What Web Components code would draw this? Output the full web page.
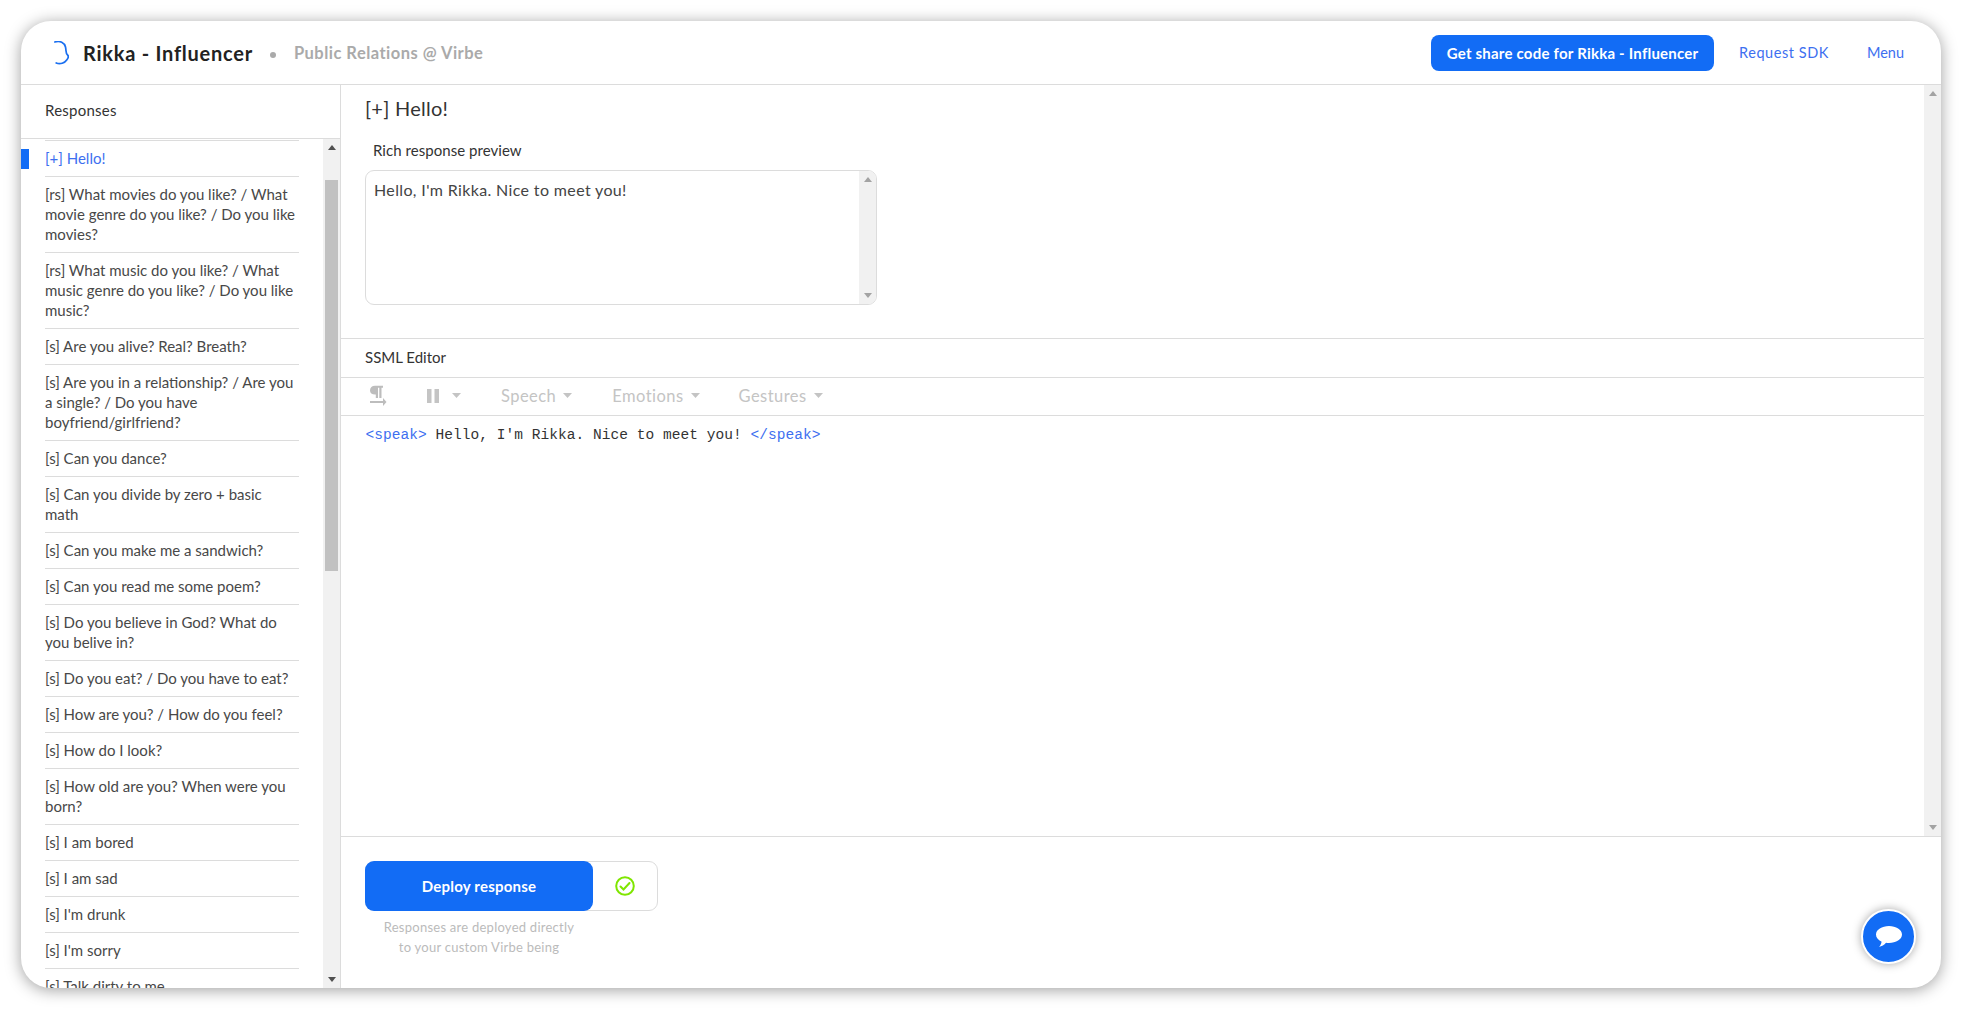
<!DOCTYPE html>
<html>
<head>
<meta charset="utf-8">
<title>Rikka - Influencer</title>
<style>
  html, body { margin: 0; height: 100%; background: #fff; overflow: hidden; }
  body { padding: 21px 21px 22px 21px; box-sizing: border-box; font-family: Lato, "Noto Sans", sans-serif; color: #333; }
</style>
</head>
<body>
<x-app>
  <x-header slot="header"></x-header>
  <x-sidebar slot="sidebar">
    <x-item active>[+] Hello!</x-item>
    <x-item>[rs] What movies do you like? / What<br>movie genre do you like? / Do you like<br>movies?</x-item>
    <x-item>[rs] What music do you like? / What<br>music genre do you like? / Do you like<br>music?</x-item>
    <x-item>[s] Are you alive? Real? Breath?</x-item>
    <x-item>[s] Are you in a relationship? / Are you<br>a single? / Do you have<br>boyfriend/girlfriend?</x-item>
    <x-item>[s] Can you dance?</x-item>
    <x-item>[s] Can you divide by zero + basic<br>math</x-item>
    <x-item>[s] Can you make me a sandwich?</x-item>
    <x-item>[s] Can you read me some poem?</x-item>
    <x-item>[s] Do you believe in God? What do<br>you belive in?</x-item>
    <x-item>[s] Do you eat? / Do you have to eat?</x-item>
    <x-item>[s] How are you? / How do you feel?</x-item>
    <x-item>[s] How do I look?</x-item>
    <x-item>[s] How old are you? When were you<br>born?</x-item>
    <x-item>[s] I am bored</x-item>
    <x-item>[s] I am sad</x-item>
    <x-item>[s] I'm drunk</x-item>
    <x-item>[s] I'm sorry</x-item>
    <x-item>[s] Talk dirty to me</x-item>
  </x-sidebar>
  <x-editor slot="main"></x-editor>
  <x-chat slot="chat"></x-chat>
</x-app>

<script>
const caret = `<svg width="9" height="5" viewBox="0 0 10 6" preserveAspectRatio="none"><path d="M0 0h10L5 6z" fill="currentColor"/></svg>`;

function shadow(el, html) {
  el.attachShadow({ mode: 'open' }).innerHTML = html;
}

class XApp extends HTMLElement {
  connectedCallback() {
    shadow(this, `
      <style>
        :host {
          display: grid;
          grid-template-columns: 320px 1fr;
          grid-template-rows: 64px 1fr;
          height: 100%;
          background: #fff;
          border-radius: 30px;
          box-shadow: 0 2px 16px rgba(0,0,0,.38);
          overflow: hidden;
          position: relative;
        }
        ::slotted([slot=header]) { grid-column: 1 / 3; }
      </style>
      <slot name="header"></slot>
      <slot name="sidebar"></slot>
      <slot name="main"></slot>
      <slot name="chat"></slot>`);
  }
}

class XHeader extends HTMLElement {
  connectedCallback() {
    shadow(this, `
      <style>
        :host {
          display: flex;
          align-items: center;
          height: 64px;
          box-sizing: border-box;
          padding: 0 36px 0 33px;
          border-bottom: 1px solid #dcdcdc;
          font-family: Lato, sans-serif;
        }
        svg { display: block; margin-right: 14px; }
        h1 { margin: 0; font-size: 20px; font-weight: 700; color: #222; letter-spacing: .75px; }
        .dot { width: 6px; height: 6px; border-radius: 50%; background: #aaa; margin: 4px 18px 0 17px; }
        .sub { font-size: 16.5px; font-weight: 700; color: #aaa; letter-spacing: .48px; flex: 1; }
        .share {
          height: 36px; width: 283px; box-sizing: border-box; border-radius: 8px; background: #126cf5;
          color: #fff; display: flex; align-items: center; justify-content: center;
          font-size: 15px; font-weight: 700; letter-spacing: .22px;
        }
        a { color: #3d6ff0; font-size: 14.5px; letter-spacing: .55px; }
        .sdk { margin: 0 38px 0 25px; }
        .menu { letter-spacing: 0; margin-right: 1px; }
      </style>
      <svg width="15" height="24" viewBox="54 40 15 24" fill="none" stroke="#1a6ff0" stroke-width="1.7" stroke-linecap="round"><path d="M54.8 41c5.200-1.500 9.700.5 10.700 5 .8 3.500 0 6 2 8 1.500 1.200.8 3-.8 5-2 3-6.500 4.700-10.500 3"/></svg>
      <h1>Rikka - Influencer</h1>
      <span class="dot"></span>
      <span class="sub">Public Relations @ Virbe</span>
      <span class="share">Get share code for Rikka - Influencer</span>
      <a class="sdk">Request SDK</a>
      <a class="menu">Menu</a>`);
  }
}

class XScrollbar extends HTMLElement {
  connectedCallback() {
    const dark = this.hasAttribute('dark');
    const start = this.getAttribute('start');
    const size = this.getAttribute('size');
    shadow(this, `
      <style>
        :host {
          display: flex; flex-direction: column; align-items: center; flex: none;
          width: 17px; background: #f1f1f1;
        }
        .arrow { height: 17px; flex: none; display: flex; align-items: center; justify-content: center; color: ${dark ? '#505050' : '#a3a3a3'}; }
        .track { flex: 1; width: 100%; min-height: 0; }
        .thumb { margin: 0 2px; background: #c1c1c1; }
        svg { display: block; }
      </style>
      <div class="arrow"><svg width="8" height="5" viewBox="0 0 8 5"><path d="M4 0l4 5H0z" fill="currentColor"/></svg></div>
      <div class="track">${size ? `<div class="thumb" style="margin-top:${start}px;height:${size}px"></div>` : ''}</div>
      <div class="arrow"><svg width="8" height="5" viewBox="0 0 8 5"><path d="M0 0h8L4 5z" fill="currentColor"/></svg></div>`);
  }
}

class XSidebar extends HTMLElement {
  connectedCallback() {
    shadow(this, `
      <style>
        :host {
          display: flex; flex-direction: column; min-height: 0; height: 100%;
          border-right: 1px solid #dcdcdc; box-sizing: border-box; overflow: hidden;
        }
        .head {
          flex: none; height: 54px; box-sizing: border-box; padding: 0 24px; line-height: 50px;
          font-size: 15px; letter-spacing: .25px; color: #333; border-bottom: 1px solid #dcdcdc;
        }
        .body { flex: 1; display: flex; min-height: 0; }
        .list { flex: 1; min-width: 0; overflow: hidden; padding-top: 1px; }
      </style>
      <div class="head">Responses</div>
      <div class="body">
        <div class="list"><slot></slot></div>
        <x-scrollbar dark start="24" size="391"></x-scrollbar>
      </div>`);
  }
}

class XItem extends HTMLElement {
  connectedCallback() {
    const active = this.hasAttribute('active');
    shadow(this, `
      <style>
        :host { display: block; position: relative; padding: 0 24px; font-size: 15px; line-height: 20px; color: ${active ? '#3d6ff0' : '#484848'}; }
        .row { border-top: 1px solid #dcdcdc; padding: 7px 0 8px; white-space: nowrap; }
        .mark { position: absolute; left: 0; top: 9px; width: 8px; height: 20px; background: #126cf5; }
      </style>
      ${active ? '<span class="mark"></span>' : ''}
      <div class="row"><slot></slot></div>`);
  }
}

class XEditor extends HTMLElement {
  connectedCallback() {
    shadow(this, `
      <style>
        :host { display: flex; flex-direction: column; min-height: 0; height: 100%; overflow: hidden; }
        .top { flex: 1; display: flex; min-height: 0; }
        .content { flex: 1; min-width: 0; display: flex; flex-direction: column; }
        h2 { margin: 0; padding: 10px 24px 0; font-size: 20px; line-height: 27px; font-weight: 400; color: #333; letter-spacing: .25px; }
        .label { padding: 18px 32px 0; font-size: 15px; line-height: 20px; letter-spacing: .05px; color: #333; }
        .preview {
          display: flex; justify-content: space-between; margin: 10px 0 32px 24px; width: 512px; height: 135px;
          box-sizing: border-box; border: 1px solid #dcdcdc; border-radius: 9px; overflow: hidden;
        }
        .preview p { margin: 0; padding: 9px 8px; font-size: 16px; line-height: 20px; color: #444; letter-spacing: .36px; }
        .section { padding: 0 24px; height: 40px; box-sizing: border-box; border-top: 1px solid #dcdcdc; border-bottom: 1px solid #dcdcdc; font-size: 15px; line-height: 36px; color: #333; flex: none; }
        .toolbar { flex: none; height: 38px; box-sizing: border-box; border-bottom: 1px solid #dcdcdc; display: flex; align-items: center; color: #c4c4c4; font-size: 16.5px; letter-spacing: .45px; padding: 0 0 2px 28px; }
        .toolbar svg { display: block; }
        .group { display: flex; align-items: center; gap: 7px; }
        .code { flex: 1; padding: 9px 24.5px; font-family: "Liberation Mono", monospace; font-size: 14.5px; letter-spacing: .05px; line-height: 20px; color: #333; white-space: pre; }
        .code b { font-weight: 400; color: #3d6ff0; }
        .foot { flex: none; height: 152px; box-sizing: border-box; border-top: 1px solid #dcdcdc; padding: 24px 24px 0; }
        .actions { display: flex; width: 293px; height: 50px; border: 1px solid #dcdcdc; border-radius: 9px; box-sizing: border-box; }
        .deploy { width: 228px; height: 50px; margin: -1px 0 0 -1px; border-radius: 9px; background: #126cf5; color: #fff; display: flex; align-items: center; justify-content: center; font-size: 15px; font-weight: 700; letter-spacing: .2px; }
        .check { flex: 1; display: flex; align-items: center; justify-content: center; }
        .note { width: 228px; text-align: center; margin-top: 7px; font-size: 13px; line-height: 19.5px; color: #bbb; letter-spacing: .25px; }
      </style>
      <div class="top">
        <div class="content">
          <h2>[+] Hello!</h2>
          <div class="label">Rich response preview</div>
          <div class="preview"><p>Hello, I'm Rikka. Nice to meet you!</p><x-scrollbar></x-scrollbar></div>
          <div class="section" style="margin-top:1px">SSML Editor</div>
          <div class="toolbar">
            <svg width="18" height="22" viewBox="0 0 18 22" fill="#bdbdbd" style="margin-right:40px"><path d="M1 5.500C1 2.500 3 .7 6 .7h8v2h-1.500V13h-2.200V2.700H9V13H6.800V9.500H6C3 9.500 1 8.200 1 5.500z"/><path d="M1 16h13v-3l3.500 4-3.500 4v-3H1z"/></svg>
            <span class="group" style="margin-right:40px;gap:13px"><svg width="12" height="14" viewBox="0 0 12 14" fill="#c4c4c4"><path d="M0 0h4.500v14H0zM7.500 0H12v14H7.500z"/></svg>${caret}</span>
            <span class="group" style="margin-right:40px">Speech ${caret}</span>
            <span class="group" style="margin-right:39px">Emotions ${caret}</span>
            <span class="group">Gestures ${caret}</span>
          </div>
          <div class="code"><b>&lt;speak&gt;</b> Hello, I'm Rikka. Nice to meet you! <b>&lt;/speak&gt;</b></div>
        </div>
        <x-scrollbar></x-scrollbar>
      </div>
      <div class="foot">
        <div class="actions">
          <div class="deploy">Deploy response</div>
          <div class="check"><svg width="20" height="20" viewBox="0 0 20 20" fill="none" stroke="#7fe600" stroke-width="2"><circle cx="10" cy="10" r="8.800"/><path d="M5.500 10.500l3 3 6-6.500" stroke-linecap="round"/></svg></div>
        </div>
        <div class="note">Responses are deployed directly<br>to your custom Virbe being</div>
      </div>`);
  }
}

class XChat extends HTMLElement {
  connectedCallback() {
    shadow(this, `
      <style>
        :host {
          position: absolute; right: 25px; bottom: 24px; width: 55px; height: 55px; box-sizing: border-box;
          border-radius: 50%; background: #126cf5; border: 2px solid #fff;
          box-shadow: 0 0 10px rgba(0,0,0,.35); display: flex; align-items: center; justify-content: center;
        }
        svg { display: block; }
      </style>
      <svg width="28" height="24" viewBox="0 0 28 24"><path d="M14 1c7 0 13 3.600 13 8.500s-6 8.500-13 8.500c-1 0-2-.1-3-.3-1.600 2-4.400 3.600-7 4.300 1.300-1.300 2.200-3 2.600-5.300C3 15 1 12.500 1 9.500 1 4.600 7 1 14 1z" fill="#fff"/></svg>`);
  }
}

customElements.define('x-app', XApp);
customElements.define('x-header', XHeader);
customElements.define('x-scrollbar', XScrollbar);
customElements.define('x-sidebar', XSidebar);
customElements.define('x-item', XItem);
customElements.define('x-editor', XEditor);
customElements.define('x-chat', XChat);
</script>
</body>
</html>
